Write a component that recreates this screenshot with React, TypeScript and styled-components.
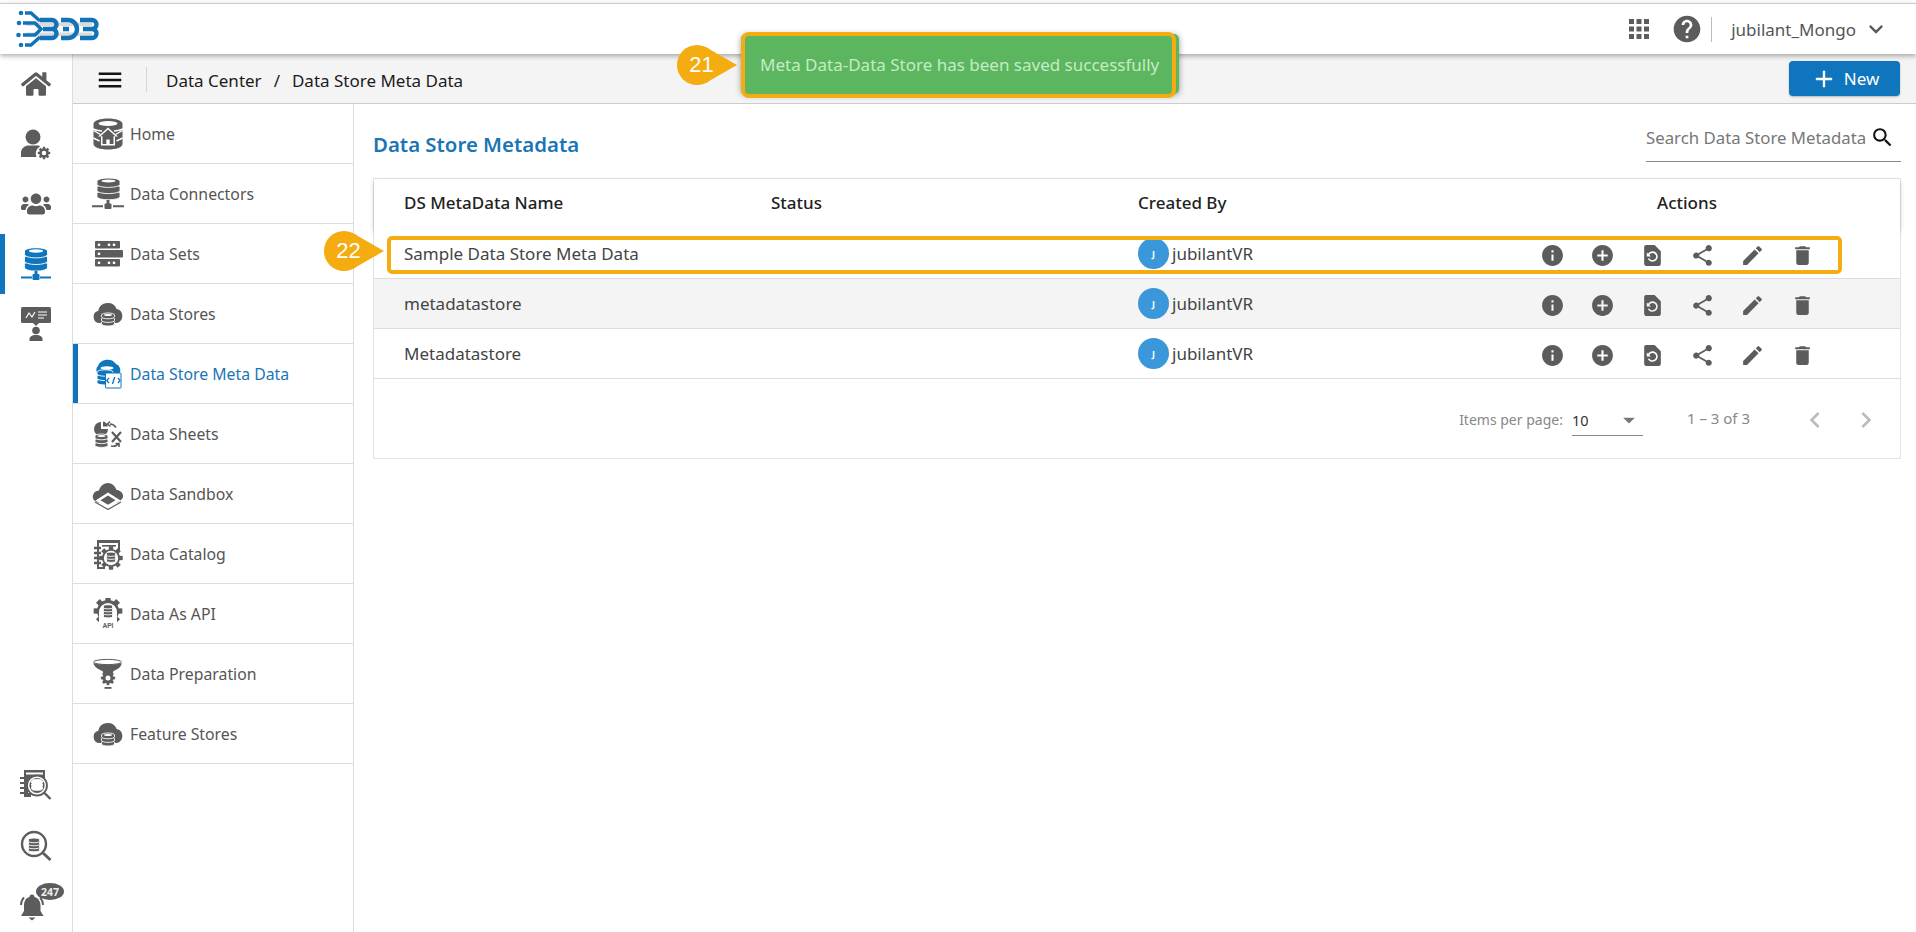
import React from "react";
import styled, { createGlobalStyle } from "styled-components";
import { FaHome, FaUsers } from "react-icons/fa";
import {
  MdInfo, MdAddCircle, MdRestorePage, MdShare, MdEdit, MdDelete, MdSearch, MdHelp, MdApps,
  MdMenu, MdKeyboardArrowDown, MdAdd, MdChevronLeft, MdChevronRight, MdArrowDropDown,
} from "react-icons/md";

const GREY = "#5c5c5c";
const BLUE = "#0f75bc";
const FONT = `"Noto Sans", "Open Sans", sans-serif`;

const Global = createGlobalStyle`
  html, body { margin: 0; padding: 0; background: #fff; }
  body { font-family: ${FONT}; overflow: hidden; }
  *, *::before, *::after { box-sizing: border-box; }
`;

const Page = styled.div`
  position: relative; height: 932px; padding-top: 3px; display: flex; flex-direction: column; overflow: hidden;
`;
const TopBar = styled.header`
  height: 51px; flex: none; display: flex; align-items: center; justify-content: space-between;
  border-top: 1px solid #ccc; background: #fff; padding: 0 26px 0 16px;
  box-shadow: 0 2px 5px rgba(0,0,0,.32); position: relative; z-index: 2;
`;
const TopRight = styled.div`display: flex; align-items: center; color: ${GREY};`;
const AppsIcon = styled(MdApps)`margin-right: 17px;`;
const Divider = styled.span`width: 1px; height: 25px; background: #bbb; margin: 0 19px 0 8px;`;
const UserName = styled.span`font-size: 17px; color: #555; margin-right: 6px;`;
const Body = styled.div`flex: 1; display: flex; min-height: 0;`;
const Rail = styled.nav`
  width: 73px; flex: none; border-right: 1px solid #ddd; display: flex; flex-direction: column;
`;
const RailGroup = styled.div<{ $bottom?: boolean }>`
  display: flex; flex-direction: column; ${(p) => p.$bottom && "margin-top: auto;"}
`;
const RailItem = styled.div<{ $active?: boolean; $h?: number }>`
  height: ${(p) => p.$h ?? 60}px; display: flex; align-items: center; justify-content: center;
  position: relative; color: ${(p) => (p.$active ? BLUE : GREY)};
  box-shadow: ${(p) => (p.$active ? `inset 5px 0 0 ${BLUE}` : "none")};
`;
const Badge = styled.span`
  position: absolute; left: 36px; top: 10px; width: 28px; height: 17px; border-radius: 50%;
  background: ${GREY}; color: #eee; font-size: 10.5px; font-weight: 700; display: flex;
  align-items: center; justify-content: center;
`;
const Main = styled.div`flex: 1; min-width: 0; display: flex; flex-direction: column;`;
const CrumbBar = styled.div`
  height: 50px; flex: none; background: #f4f4f4; border-bottom: 1px solid #ccc;
  display: flex; align-items: center; padding: 2px 16px 0 22px; color: #111;
`;
const MenuToggle = styled(MdMenu)`color: #111;`;
const CrumbSep = styled.span`width: 1px; height: 25px; background: #d5d5d5; margin: 0 19px 0 21px;`;
const Crumb = styled.span`font-size: 17px; color: #1c1c1c; padding-top: 2px;`;
const CrumbSlash = styled(Crumb)`margin: 0 12px;`;
const NewButton = styled.button`
  margin-left: auto; margin-top: -2px; width: 111px; height: 35px; border: 0; border-radius: 4px; background: ${BLUE};
  color: #fff; font: 400 17px ${FONT}; display: flex; align-items: center; justify-content: center; gap: 6px;
  box-shadow: 0 1px 2px rgba(0,0,0,.25);
`;
const Split = styled.div`flex: 1; display: flex; min-height: 0;`;
const SideMenu = styled.aside`width: 281px; flex: none; border-right: 1px solid #ddd;`;
const MenuRow = styled.div<{ $active?: boolean }>`
  height: 60px; display: flex; align-items: center; gap: 6px; padding-left: 19px;
  border-bottom: 1px solid #ddd; font-size: 15.8px;
  color: ${(p) => (p.$active ? "#1a75b5" : "#555")};
  box-shadow: ${(p) => (p.$active ? `inset 5px 0 0 ${BLUE}` : "none")};
`;
const MenuIcon = styled.span<{ $blue?: boolean }>`
  width: 32px; height: 32px; flex: none; display: flex; color: ${(p) => (p.$blue ? BLUE : GREY)};
`;
const Content = styled.main`flex: 1; min-width: 0; padding: 0 15px 0 19px;`;
const TitleRow = styled.div`height: 74px; display: flex; align-items: flex-start; justify-content: space-between;`;
const Title = styled.h1`margin: 28px 0 0; font-size: 20.4px; font-weight: 600; color: #1a75b5; line-height: 24px;`;
const SearchBox = styled.label`
  width: 255px; height: 46px; margin-top: 12px; border-bottom: 1px solid #888; display: flex; align-items: center;
  color: #111; padding-bottom: 2px; padding-right: 6px;
`;
const SearchInput = styled.input`
  flex: 1; min-width: 0; border: 0; outline: 0; padding: 0; background: none; font: 16.8px ${FONT};
  &::placeholder { color: #777; opacity: 1; }
`;
const Card = styled.section`border: 1px solid #e2e2e2; position: relative;`;
const HeadRow = styled.div`
  height: 50px; display: grid; grid-template-columns: 367px 367px 519px 1fr; align-items: center; padding: 0 0 4px 30px;
  font-size: 17px; color: #222; font-weight: 500; box-shadow: 0 3px 5px rgba(0,0,0,.2); position: relative;
`;
const DataRow = styled.div<{ $shade?: boolean }>`
  height: 50px; display: grid; grid-template-columns: 367px 367px 390px 1fr; align-items: center; padding-left: 30px;
  border-bottom: 1px solid #ddd; font-size: 17px; color: #444; position: relative;
  background: ${(p) => (p.$shade ? "#f4f4f4" : "#fff")};
`;
const Person = styled.div`display: flex; align-items: center; gap: 3px;`;
const Avatar = styled.span`
  width: 31px; height: 31px; border-radius: 50%; background: #3a97d9; color: #fff; font-size: 9px; font-weight: 700;
  display: flex; align-items: center; justify-content: center;
`;
const Actions = styled.div`display: flex; color: ${GREY}; padding-top: 4px;`;
const ActionCell = styled.span`width: 50px; height: 25px; display: flex; align-items: center; justify-content: center; margin-left: -1px; margin-right: 1px;`;
const Pager = styled.div`
  height: 79px; display: flex; align-items: center; justify-content: flex-end; color: #888; font-size: 14px; padding: 2px 8px 0 0;
`;
const PagerSelect = styled.div`
  width: 71px; height: 31px; margin: 1px 0 0 9px; border-bottom: 1px solid #888; display: flex; align-items: center;
  justify-content: space-between; color: #333; font-size: 14.5px;
`;
const PagerRange = styled.span`margin: 0 40px 3px 44px; font-size: 15px;`;
const PagerNav = styled.span`width: 50px; display: flex; justify-content: center; color: #bbb; margin-right: 1px;`;
const HighlightBox = styled.div`
  position: absolute; left: 13px; width: 1455px; top: 7px; height: 38px; border: 4px solid #f4ac10; border-radius: 5px;
  pointer-events: none;
`;
const Callout = styled.span`
  position: absolute; width: 40px; height: 40px; padding-left: 9px; border-radius: 50%; background: #f4ac10; color: #fff;
  font: 22px "Liberation Sans", Arial, sans-serif; display: flex; align-items: center; justify-content: center; z-index: 1;
  &::after {
    content: ""; position: absolute; left: 29px; top: 2.3px; width: 31px; height: 35.4px; background: #f4ac10; z-index: -1;
    clip-path: polygon(0 0, 100% 50%, 0 100%);
  }
`;
const RowCallout = styled(Callout)`left: -67px; top: -9px;`;
const ToastCallout = styled(Callout)`left: 677px; top: 45px; z-index: 5;`;
const Toast = styled.div`
  position: absolute; left: 741px; top: 34px; width: 438px; height: 60px; background: #5cb660; border-radius: 5px;
  box-shadow: 0 1px 6px rgba(0,0,0,.4); display: flex; align-items: center; padding-left: 19px; color: #c6ebc4;
  font-size: 17px; z-index: 5;
  &::after {
    content: ""; position: absolute; left: 0; top: -2px; width: 435px; height: 66px; border: 4px solid #f4ac10; border-radius: 8px;
  }
`;
const Glyph = styled.svg`width: 100%; height: 100%; display: block;`;
const RailGlyph = styled.svg`width: 34px; height: 34px; display: block;`;
const BellGlyph = styled(RailGlyph)`margin: 6px 9px 0 0;`;
const LogoMark = styled.svg`width: 84px; height: 38px; display: block;`;

/* ---------- drawn icons ---------- */
function Discs({ x, y, rx, ry = 3.2, h = 3.4, step = 6.6, n = 3, c = "currentColor", hole = true }: { x: number; y: number; rx: number; ry?: number; h?: number; step?: number; n?: number; c?: string; hole?: boolean }) {
  const items = [];
  for (let i = n - 1; i >= 0; i--) {
    const ty = y + i * step;
    items.push(
      <path key={i} d={`M${x} ${ty}v${h}a${rx} ${ry} 0 0 0 ${2 * rx} 0v${-h}a${rx} ${ry} 0 0 0 ${-2 * rx} 0z`} fill={c} stroke="#fff" strokeWidth=".9" />
    );
  }
  return (
    <g>
      {items}
      {hole && <ellipse cx={x + rx} cy={y} rx={rx * 0.62} ry={ry * 0.5} fill="#fff" />}
    </g>
  );
}
const cloud = "M7.5 24a6.2 6.2 0 0 1-1.2-12.2A9.6 9.6 0 0 1 24.6 10a7.2 7.2 0 0 1 .4 14z";
const gearPath = (cx: number, cy: number, r: number) => {
  const teeth = [];
  for (let i = 0; i < 8; i++) {
    teeth.push(
      <rect key={i} x={cx - r * 0.24} y={cy - r * 1.3} width={r * 0.48} height={r * 0.6} transform={`rotate(${i * 45} ${cx} ${cy})`} fill="currentColor" />
    );
  }
  return (
    <g>
      {teeth}
      <circle cx={cx} cy={cy} r={r} fill="currentColor" />
    </g>
  );
};

const IconHomeDb = () => (
  <Glyph viewBox="0 0 32 32">
    <path d="M1.500 6c0-3.400 6.500-5.500 14.500-5.500S30.500 2.600 30.500 6v20c0 3.400-6.500 5.500-14.500 5.500S1.500 29.400 1.500 26z" fill="currentColor" />
    <ellipse cx="16" cy="5.500" rx="9.500" ry="2.400" fill="#fff" />
    <path d="M1.500 12.500l7 4M30.500 12.500l-7 4M1.500 20l6 3M30.500 20l-6 3M1 11c4 1.500 7 2 9 2M31 11c-4 1.500-7 2-9 2" stroke="#fff" strokeWidth="1.400" fill="none" />
    <path d="M16 9.500l-10 9h3v9h14v-9h3z" fill="#fff" />
    <path d="M16 11.500l-7.500 6.800h2v7.700h3.800v-4.500h3.400v4.500h3.800v-7.700h2z" fill="currentColor" />
  </Glyph>
);
const IconDbNet = () => (
  <Glyph viewBox="0 0 32 32">
    <Discs x={5} y={3} rx={11.500} ry={3} h={3.400} step={6.200} />
    <rect x="14.500" y="22" width="3" height="5" fill="currentColor" />
    <rect x="12.500" y="25.500" width="7" height="5.500" rx="1" fill="currentColor" />
    <path d="M0 28.300h11M21 28.300h11" stroke="currentColor" strokeWidth="2" />
  </Glyph>
);
const IconSets = () => (
  <Glyph viewBox="0 0 32 32">
    {[3, 12, 21].map((y, i) => (
      <g key={y}>
        <rect x={3} y={y} width={i === 1 ? 28 : 25} height="7.500" rx="1" fill="currentColor" />
        {(i === 1 ? [7] : [7, 17, 22]).map((cx) => (
          <rect key={cx} x={cx - 1.200} y={y + 2.600} width="2.400" height="2.400" fill="#fff" />
        ))}
      </g>
    ))}
  </Glyph>
);
const IconStores = () => (
  <Glyph viewBox="0 0 32 32">
    <path d={cloud} fill="currentColor" transform="translate(0 1)" />
    <Discs x={9.500} y={17} rx={6.500} ry={2} h={1.800} step={3.600} n={3} />
  </Glyph>
);
const IconMeta = () => (
  <Glyph viewBox="0 0 32 32">
    <path d="M6 15a5.500 5.500 0 0 1 0-8 10 9 0 0 1 18-2 6.500 6.500 0 0 1 3 10z" fill="currentColor" transform="translate(0 1)" />
    <ellipse cx="15" cy="10" rx="6.500" ry="1.800" fill="#fff" />
    <Discs x={5} y={14} rx={8} ry={2.200} h={2} step={4.400} n={3} hole={false} />
    <rect x="13.500" y="15" width="15.500" height="15" rx=".6" fill="#fff" stroke="currentColor" strokeWidth="1" />
    <path d="M17 20l-2.300 2.500 2.300 2.500M26 20l2 2.500-2 2.500M22.800 19l-2.400 7" stroke="currentColor" strokeWidth="1.300" fill="none" />
  </Glyph>
);
const IconSheets = () => (
  <Glyph viewBox="0 0 32 32">
    <path d="M11 3v7h7a7 7 0 1 1-7-7z" fill="currentColor" transform="translate(-2 1)" />
    <path d="M11 3.500a6 6 0 0 1 4.800 5H11z" fill="currentColor" />
    <Discs x={3} y={18} rx={6.500} ry={2} h={1.800} step={3.800} n={3} />
    <path d="M20 14l9 10M29 14l-9 10" stroke="currentColor" strokeWidth="2.200" />
    <path d="M24 9.500c-2-3-4-3.500-6-3.500M18 3.500l-2.500 2.500 3 2.500M19 28c3 .5 6 0 7.500-2.500M27 29v-3.500h-3.500" stroke="currentColor" strokeWidth="1.600" fill="none" />
  </Glyph>
);
const IconSandbox = () => (
  <Glyph viewBox="0 0 32 32">
    <path d="M7 25l-4-2C0 21 0 16.500 3 14c1.500-1 3-1.500 4-1.500C8 8 12 5 16 5s7 3 8.500 7c2.500 0 5.500 1.500 6.500 5 .5 2.500-1 4.500-3.500 6L25 25z" fill="currentColor" />
    <path d="M16 14.500l-12.500 8L16 30.500l12.500-8z" fill="#fff" />
    <path d="M16 17.500l-7.500 4.700 7.500 4.500 7.500-4.500z" fill="currentColor" />
    <path d="M3 24l13 7.500L29 24" stroke="currentColor" strokeWidth="1.200" fill="none" />
  </Glyph>
);
const IconCatalog = () => (
  <Glyph viewBox="0 0 32 32">
    <path d="M5 2h23v10h-2V5H7v24h6v2H5z" fill="currentColor" />
    <rect x="10" y="7" width="14" height="1.600" fill="currentColor" />
    <path d="M2 10h7M2 15h7M2 20h7M2 25h7" stroke="currentColor" strokeWidth="2.400" />
    {gearPath(19, 20, 9)}
    <circle cx="19" cy="20" r="7.200" fill="#fff" />
    <Discs x={14.500} y={15.500} rx={4.500} ry={1.400} h={1.500} step={3} n={3} hole={false} />
  </Glyph>
);
const IconApi = () => (
  <Glyph viewBox="0 0 32 32">
    {gearPath(16, 13, 11)}
    <path d="M7 27V14a9 9 0 0 1 18 0v13z" fill="#fff" />
    <Discs x={11.500} y={8} rx={4.500} ry={1.300} h={1.600} step={3} n={4} hole={false} />
    <text x="16" y="30" textAnchor="middle" fontSize="6.500" fontFamily="Liberation Sans, sans-serif" fontWeight="700" fill="currentColor">API</text>
  </Glyph>
);
const IconPrep = () => (
  <Glyph viewBox="0 0 32 32">
    <ellipse cx="15.500" cy="4" rx="14" ry="2.600" fill="none" stroke="currentColor" strokeWidth="1" />
    <path d="M1.500 5c3 2 24 2 28 0 .5 3-3 6-8 8l-1 2h-9l-1-2c-5-2-9-5-9-8z" fill="currentColor" />
    {gearPath(16, 20, 5.500)}
    <circle cx="16" cy="20" r="2.500" fill="#fff" />
    <rect x="12.500" y="29" width="7" height="1.800" fill="currentColor" />
  </Glyph>
);
const IconNotebook = () => (
  <RailGlyph viewBox="0 0 34 34">
    <path d="M5 2h21v9H9v14h3v4H5z" fill="currentColor" />
    <path d="M7 4.500h17v2H7z" fill="#fff" />
    <path d="M1 10h6M1 15h6M1 20h6M1 25h6" stroke="currentColor" strokeWidth="2" />
    <circle cx="18" cy="17.500" r="10" fill="#fff" stroke="currentColor" strokeWidth="1.800" />
    <circle cx="18" cy="17.500" r="7.600" fill="currentColor" />
    <Discs x={12.500} y={13} rx={5.500} ry={1.600} h={1.700} step={3} n={3} c="#fff" hole={false} />
    <path d="M25.500 25l6 6" stroke="currentColor" strokeWidth="2.400" />
  </RailGlyph>
);
const IconDbSearch = () => (
  <RailGlyph viewBox="0 0 34 34">
    <circle cx="15" cy="17" r="12" fill="none" stroke="currentColor" strokeWidth="2.400" />
    <Discs x={9.500} y={12.500} rx={5.500} ry={1.600} h={1.700} step={3} n={4} hole={false} />
    <path d="M24 26l7.500 7" stroke="currentColor" strokeWidth="2.800" />
  </RailGlyph>
);
const IconChatUser = () => (
  <RailGlyph viewBox="0 0 34 34">
    <rect x="2" y="0" width="30" height="16" rx="1.500" fill="currentColor" />
    <path d="M14 16h6l-3 3z" fill="currentColor" />
    <path d="M7 11l3-5 3 4 3-5" stroke="#fff" strokeWidth="1.200" fill="none" />
    <path d="M19 5h9M19 8h9M19 11h6" stroke="#fff" strokeWidth="1.200" />
    <circle cx="17" cy="23.500" r="3.800" fill="currentColor" />
    <path d="M10.500 34v-2c0-2.500 3-4 6.500-4s6.500 1.500 6.500 4v2z" fill="currentColor" />
  </RailGlyph>
);
const IconRailDb = () => (
  <RailGlyph viewBox="0 0 34 34">
    <Discs x={5.500} y={4} rx={11.500} ry={3.300} h={3.600} step={6.600} />
    <rect x="15.500" y="24" width="3" height="5" fill="currentColor" />
    <rect x="13.500" y="27" width="7" height="6" rx="1" fill="currentColor" />
    <path d="M2 30.500h11M21 30.500h11" stroke="currentColor" strokeWidth="2" />
  </RailGlyph>
);
const IconUserGear = () => (
  <RailGlyph viewBox="0 0 34 34">
    <circle cx="14" cy="10" r="7.500" fill="currentColor" />
    <path d="M2 30v-4c0-5 4-7.500 8-7.500h8c2 0 3 .5 3 1a8 8 0 0 0-3.500 10.500z" fill="currentColor" />
    {gearPath(25, 26, 4.800)}
    <circle cx="25" cy="26" r="2.300" fill="#fff" />
  </RailGlyph>
);
const IconBell = () => (
  <BellGlyph viewBox="0 0 34 34">
    <path d="M14.500 8a2.500 2.500 0 0 1 5 0c4 1 6 4.500 6 9v5l3 5H6l3-5v-5c0-4.500 1.500-8 5.500-9z" fill="currentColor" />
    <path d="M13.500 28.500h7l-3.500 3z" fill="currentColor" />
    <path d="M6 16c0-3 1-5.500 3-7.500M28 16c0-3-1-5.500-3-7.500" stroke="currentColor" strokeWidth="1.800" fill="none" />
  </BellGlyph>
);
const IconLogo = () => (
  <LogoMark viewBox="0 0 84 38">
    <g fill="#dcdcdc">
      <rect x="10" y="12.500" width="66" height="3.500" />
      <rect x="10" y="22.500" width="66" height="3.500" />
    </g>
    <g fill="none" stroke="#1273b9" strokeWidth="4.400">
      <path d="M24 10h12a4.500 4.500 0 0 1 0 9h-9M36 19a4.500 4.500 0 0 1 0 9H24" />
      <path d="M45 10h7a9 9 0 0 1 0 18h-7M47 19h6" />
      <path d="M64 10h12a4.500 4.500 0 0 1 0 9h-9M76 19a4.500 4.500 0 0 1 0 9H64" />
      <path d="M9 3h6l9 8M7 13h12l6 6-6 6H7M9 35h6l9-8" strokeWidth="3.400" />
    </g>
    <g fill="#1273b9">
      <circle cx="5" cy="3" r="2.300" /><circle cx="3" cy="13" r="2.300" /><circle cx="2.500" cy="25" r="2.300" /><circle cx="5" cy="35" r="2.300" />
    </g>
  </LogoMark>
);

const menu: [string, React.ComponentType, boolean?][] = [
  ["Home", IconHomeDb],
  ["Data Connectors", IconDbNet],
  ["Data Sets", IconSets],
  ["Data Stores", IconStores],
  ["Data Store Meta Data", IconMeta, true],
  ["Data Sheets", IconSheets],
  ["Data Sandbox", IconSandbox],
  ["Data Catalog", IconCatalog],
  ["Data As API", IconApi],
  ["Data Preparation", IconPrep],
  ["Feature Stores", IconStores],
];
const rows = ["Sample Data Store Meta Data", "metadatastore", "Metadatastore"];
const actionIcons = [MdInfo, MdAddCircle, MdRestorePage, MdShare, MdEdit, MdDelete];

export default function App() {
  return (
    <Page>
      <Global />
      <TopBar>
        <IconLogo />
        <TopRight>
          <AppsIcon size={30} />
          <MdHelp size={32} />
          <Divider />
          <UserName>jubilant_Mongo</UserName>
          <MdKeyboardArrowDown size={28} />
        </TopRight>
      </TopBar>
      <Body>
        <Rail>
          <RailGroup>
            <RailItem><FaHome size={30} /></RailItem>
            <RailItem><IconUserGear /></RailItem>
            <RailItem><FaUsers size={30} /></RailItem>
            <RailItem $active><IconRailDb /></RailItem>
            <RailItem><IconChatUser /></RailItem>
          </RailGroup>
          <RailGroup $bottom>
            <RailItem $h={59}><IconNotebook /></RailItem>
            <RailItem $h={59}><IconDbSearch /></RailItem>
            <RailItem $h={59}><IconBell /><Badge>247</Badge></RailItem>
          </RailGroup>
        </Rail>
        <Main>
          <CrumbBar>
            <MenuToggle size={30} />
            <CrumbSep />
            <Crumb>Data Center</Crumb>
            <CrumbSlash>/</CrumbSlash>
            <Crumb>Data Store Meta Data</Crumb>
            <NewButton><MdAdd size={28} />New</NewButton>
          </CrumbBar>
          <Split>
            <SideMenu>
              {menu.map(([label, Icon, active]) => (
                <MenuRow key={label} $active={active}>
                  <MenuIcon $blue={active}><Icon /></MenuIcon>
                  {label}
                </MenuRow>
              ))}
            </SideMenu>
            <Content>
              <TitleRow>
                <Title>Data Store Metadata</Title>
                <SearchBox>
                  <SearchInput placeholder="Search Data Store Metadata" />
                  <MdSearch size={25} />
                </SearchBox>
              </TitleRow>
              <Card>
                <HeadRow>
                  <span>DS MetaData Name</span>
                  <span>Status</span>
                  <span>Created By</span>
                  <span>Actions</span>
                </HeadRow>
                {rows.map((name, i) => (
                  <DataRow key={name} $shade={i === 1}>
                    <span>{name}</span>
                    <span />
                    <Person><Avatar>J</Avatar>jubilantVR</Person>
                    <Actions>
                      {actionIcons.map((Ic, k) => (
                        <ActionCell key={k}><Ic size={25} /></ActionCell>
                      ))}
                    </Actions>
                    {i === 0 && (
                      <HighlightBox><RowCallout>22</RowCallout></HighlightBox>
                    )}
                  </DataRow>
                ))}
                <Pager>
                  <span>Items per page:</span>
                  <PagerSelect>10<MdArrowDropDown size={28} color="#777" /></PagerSelect>
                  <PagerRange>1 – 3 of 3</PagerRange>
                  <PagerNav><MdChevronLeft size={32} /></PagerNav>
                  <PagerNav><MdChevronRight size={32} /></PagerNav>
                </Pager>
              </Card>
            </Content>
          </Split>
        </Main>
      </Body>
      <ToastCallout>21</ToastCallout>
      <Toast>Meta Data-Data Store has been saved successfully</Toast>
    </Page>
  );
}
